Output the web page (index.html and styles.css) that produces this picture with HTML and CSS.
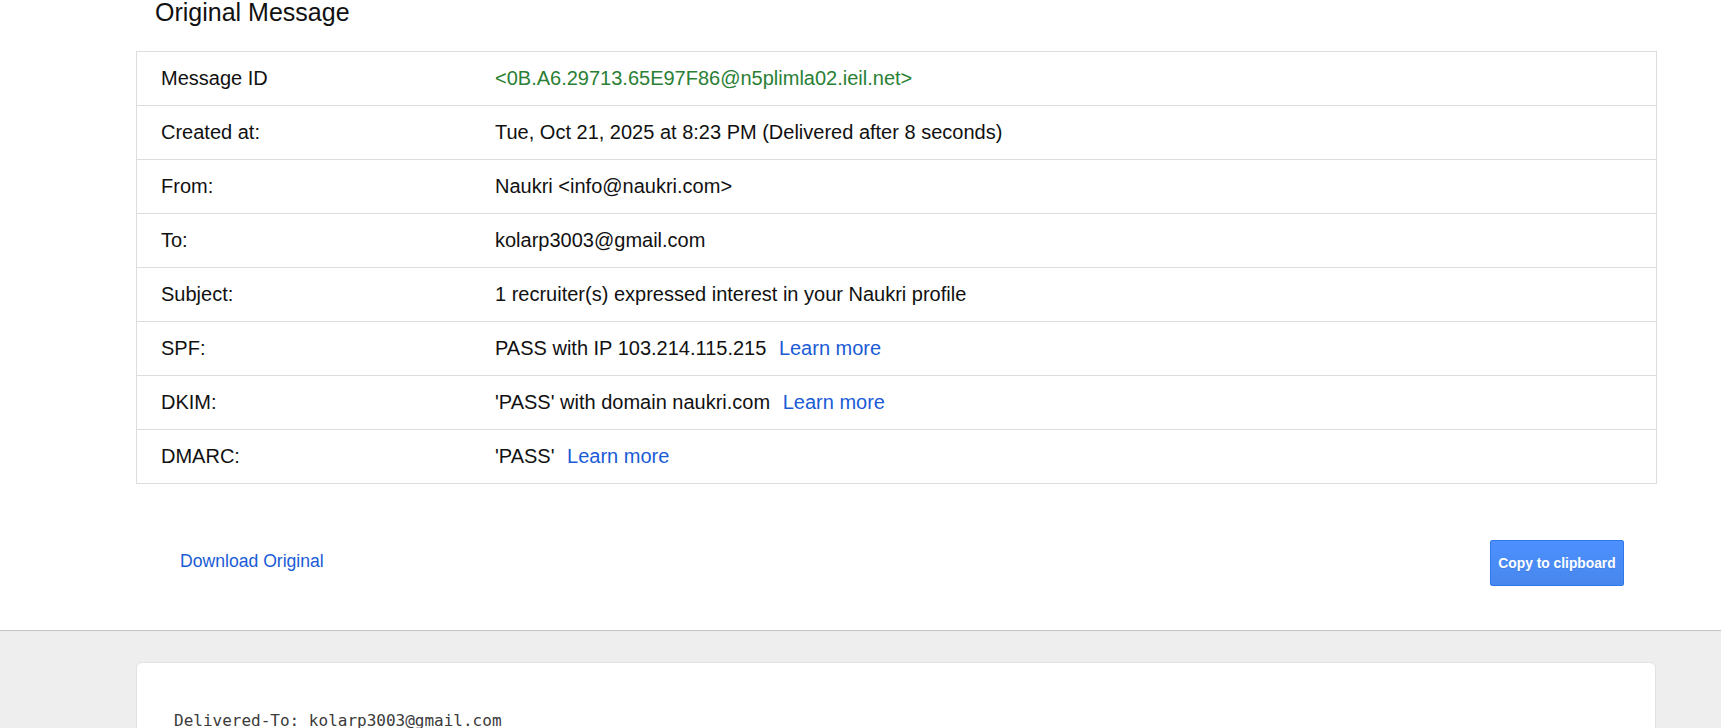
FILE: index.html
```html
<!DOCTYPE html>
<html lang="en">
<head>
<meta charset="utf-8">
<title>Original Message</title>
<link rel="stylesheet" href="styles.css">
</head>
<body>
<div class="top">
  <h2 class="title">Original Message</h2>
  <div class="details">
    <div class="row"><div class="label">Message ID</div><div class="value id">&lt;0B.A6.29713.65E97F86@n5plimla02.ieil.net&gt;</div></div>
    <div class="row"><div class="label">Created at:</div><div class="value">Tue, Oct 21, 2025 at 8:23 PM (Delivered after 8 seconds)</div></div>
    <div class="row"><div class="label">From:</div><div class="value">Naukri &lt;info@naukri.com&gt;</div></div>
    <div class="row"><div class="label">To:</div><div class="value">kolarp3003@gmail.com</div></div>
    <div class="row"><div class="label">Subject:</div><div class="value">1 recruiter(s) expressed interest in your Naukri profile</div></div>
    <div class="row"><div class="label">SPF:</div><div class="value">PASS with IP 103.214.115.215 <a class="learn" href="#">Learn more</a></div></div>
    <div class="row"><div class="label">DKIM:</div><div class="value">'PASS' with domain naukri.com <a class="learn" href="#">Learn more</a></div></div>
    <div class="row"><div class="label">DMARC:</div><div class="value">'PASS' <a class="learn" href="#">Learn more</a></div></div>
  </div>
  <div class="actions">
    <a class="download" href="#">Download Original</a>
    <button class="copy" type="button">Copy to clipboard</button>
  </div>
</div>
<div class="bottom">
  <div class="raw"><pre class="raw-text">Delivered-To: kolarp3003@gmail.com</pre></div>
</div>
</body>
</html>
```
FILE: styles.css
```css
html, body {
  margin: 0;
  padding: 0;
  background: #eeeeee;
  font-family: Arial, "Liberation Sans", Helvetica, sans-serif;
  color: #111;
}
.top {
  background: #fff;
  padding: 0 64px 0 136px;
  border-bottom: 1px solid #c4c4c4;
}
.title {
  margin: 0 0 26px 19px;
  font-size: 25px;
  line-height: 25px;
  font-weight: normal;
  color: #111;
}
.details {
  border: 1px solid #dddddd;
}
.row {
  display: grid;
  grid-template-columns: 334px 1fr;
  height: 54px;
  box-sizing: border-box;
  border-bottom: 1px solid #dddddd;
  align-items: center;
  font-size: 20px;
}
.row:last-child {
  border-bottom: none;
  height: 53px;
}
.label, .value {
  padding: 0 24px;
  white-space: nowrap;
}
.id {
  color: #2a8035;
}
.learn {
  color: #1a5bd6;
  text-decoration: none;
  margin-left: 7px;
}
.actions {
  display: flex;
  justify-content: space-between;
  align-items: center;
  padding: 56px 33px 44px 44px;
}
.download {
  color: #1a5bd6;
  text-decoration: none;
  font-size: 17.6px;
  padding-bottom: 4px;
}
.copy {
  height: 46px;
  width: 134px;
  padding: 0;
  border: 1px solid #3079ed;
  border-radius: 2px;
  background: linear-gradient(#4d90fe, #4787ed);
  color: #fff;
  font-family: Arial, "Liberation Sans", sans-serif;
  font-weight: bold;
  font-size: 13.8px;
  text-shadow: 0 1px rgba(0,0,0,0.1);
  cursor: pointer;
}
.bottom {
  padding: 31px 65px 0 136px;
}
.raw {
  background: #fff;
  border: 1px solid #e2e2e2;
  border-radius: 6px;
  padding: 48px 37px 40px;
}
.raw-text {
  margin: 0;
  font-family: "DejaVu Sans Mono", "Liberation Mono", monospace;
  font-size: 16px;
  line-height: 19px;
  color: #3a3a3a;
}
```
